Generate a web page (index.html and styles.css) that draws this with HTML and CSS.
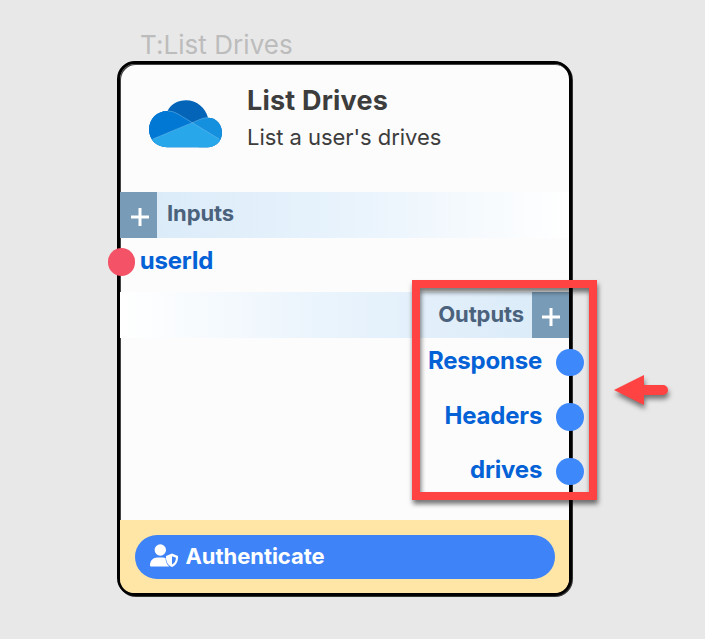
FILE: index.html
```html
<!DOCTYPE html>
<html lang="en">
<head>
<meta charset="utf-8">
<title>List Drives</title>
<link rel="stylesheet" href="styles.css">
</head>
<body>
<main class="canvas">
  <div class="node-label">T:List Drives</div>
  <section class="node">
    <header class="node-header">
      <svg class="logo" viewBox="0 0 74 48" aria-hidden="true">
        <defs><clipPath id="cloud"><path d="M18 47.200C7 47.200 0 39 0 29.500C0 19 8 11 18.500 11C22 4 29 .3 37 .3C47.500 .3 56.500 7.500 59 17.700C67 17.700 73 24 73 32.500C73 41 67 47.200 58.500 47.200Z"/></clipPath></defs>
        <g clip-path="url(#cloud)">
          <path fill="#0364b8" d="M0 0H74V48H0Z"/>
          <path fill="#0078d4" d="M0 11H18Q24 10.500 29 14L43.500 22.700L20 40L0 48Z"/>
          <path fill="#1490df" d="M43.500 22.700L52 19Q55 17.700 59 17.500L74 15V48H50Z"/>
          <path fill="#28a8ea" d="M0 40.800L4 39L43.500 22.700L70.500 39.200L74 48H0Z"/>
          <path fill="none" stroke="#7bbcea" stroke-width=".5" d="M19 11Q24 11 29 14L70.500 39.200M4 39L52 19Q55 17.700 59 17.700"/>
        </g>
      </svg>
      <div class="heading">
        <h1>List Drives</h1>
        <p>List a user's drives</p>
      </div>
    </header>
    <div class="bar bar-inputs">
      <span class="add"><svg viewBox="0 0 18 18"><path d="M9 0V18M0 9H18"/></svg></span>
      <span class="bar-title">Inputs</span>
    </div>
    <div class="inputs">
      <div class="port port-in"><i class="dot"></i><span>userId</span></div>
    </div>
    <div class="bar bar-outputs">
      <span class="bar-title">Outputs</span>
      <span class="add"><svg viewBox="0 0 18 18"><path d="M9 0V18M0 9H18"/></svg></span>
    </div>
    <div class="outputs">
      <div class="port port-out"><span>Response</span><i class="dot"></i></div>
      <div class="port port-out"><span>Headers</span><i class="dot"></i></div>
      <div class="port port-out"><span>drives</span><i class="dot"></i></div>
    </div>
    <footer class="node-footer">
      <button class="auth" type="button">
        <svg class="user" viewBox="0 0 29 24" aria-hidden="true">
          <circle cx="10.300" cy="6" r="5.700"/>
          <path d="M0 21.500C0 16.500 3 13.500 7.500 13.500H12.500C13.800 13.500 14.800 13.700 15.500 14C15.600 17.500 16.800 20.500 19.300 22.500H1Q0 22.500 0 21.500Z"/>
          <path fill-rule="evenodd" d="M22 9.500L28 12C28.300 17 26.500 21 22 23C17.500 21 15.700 17 16 12ZM22 12.200V20.500C24.700 19 25.900 16.500 25.900 13.700Z"/>
        </svg>
        <span>Authenticate</span>
      </button>
    </footer>
  </section>
  <div class="highlight"></div>
  <svg class="arrow" viewBox="0 0 54 32" aria-hidden="true"><path d="M0 15L30 0V10H49A5 5 0 0 1 49 20H30V30Z"/></svg>
</main>
</body>
</html>
```

FILE: styles.css
```css
* { box-sizing: border-box; }
body {
  margin: 0;
  background: #e8e8e8;
  font-family: Inter, "Liberation Sans", sans-serif;
  font-feature-settings: "calt" 0;
}
.canvas {
  position: relative;
  width: 705px;
  height: 639px;
  padding: 29px 0 0 117px;
  overflow: hidden;
}
.node-label {
  height: 32px;
  padding-left: 23px;
  font-size: 26px;
  line-height: 32px;
  letter-spacing: .05px;
  color: #bcbcbc;
  white-space: nowrap;
}
.node {
  display: flex;
  flex-direction: column;
  width: 455px;
  height: 535px;
  border: 3px solid #000;
  border-radius: 18px;
  background: #fcfcfc;
  box-shadow: 1px 1px 0 #333, inset 1px 1px 0 #444;
}
.node-header {
  display: flex;
  height: 128px;
  padding: 20px 0 0 29px;
}
.logo {
  width: 74px;
  height: 48px;
  margin-top: 16px;
}
.heading { margin-left: 24px; white-space: nowrap; color: #3d3d3d; }
h1 {
  margin: 0;
  font-size: 27px;
  line-height: 34px;
  font-weight: 700;
  letter-spacing: .2px;
}
p {
  margin: 3px 0 0;
  font-size: 22px;
  line-height: 32px;
  letter-spacing: -.05px;
}
.bar {
  display: flex;
  height: 46px;
  color: #4b627d;
  font-size: 22px;
  font-weight: 700;
  letter-spacing: -.1px;
}
.bar-title { line-height: 43px; }
.bar-inputs { background: linear-gradient(90deg, #d9eaf8, #e8f3fc 50%, #fff); }
.bar-inputs .bar-title { margin-left: 10px; }
.bar-outputs {
  justify-content: flex-end;
  background: linear-gradient(270deg, #d9eaf8, #e8f3fc 50%, #fff);
}
.bar-outputs .bar-title { margin-right: 8px; padding-top: 1px; }
.add {
  display: flex;
  align-items: center;
  justify-content: center;
  width: 37px;
  padding: 3px 0 0 2px;
  background: #789bb7;
}
.add svg { width: 18px; height: 18px; }
.add path { stroke: #fff; stroke-width: 3; }
.bar-outputs .add { padding-left: 1.500px; }
.inputs { height: 54px; padding-top: 10px; }
.port {
  display: flex;
  align-items: center;
  height: 28px;
  color: #0462d6;
  font-size: 24px;
  font-weight: 700;
  letter-spacing: -.18px;
}
.port span { line-height: 28px; margin-top: -2px; }
.dot {
  width: 27.500px;
  height: 27.500px;
  border-radius: 50%;
  background: #3d88fa;
}
.port-in .dot { margin: 0 4.500px 0 -12.300px; background: #f45266; }
.port-out { justify-content: flex-end; }
.port-out .dot { margin: 0 -14.700px 0 14px; }
.outputs {
  display: flex;
  flex-direction: column;
  gap: 26.5px;
  height: 182px;
  padding-top: 10.500px;
}
.port-out span { margin-top: -3px; }
.node-footer {
  height: 73px;
  padding: 15px 14px 14px 15px;
  background: #ffe6a6;
  border-radius: 0 0 14px 14px;
}
.auth {
  display: flex;
  width: 419.500px;
  height: 43.500px;
  padding: 9px 15px 0;
  gap: 6.500px;
  border: 0;
  border-radius: 22px;
  background: #3e83f8;
  color: #fff;
  font: 700 22px/26px Inter, sans-serif;
  letter-spacing: -.05px;
}
.auth span { margin-top: -1px; }
.user { width: 29px; height: 24px; fill: #fff; }
.highlight {
  position: absolute;
  left: 412px;
  top: 280px;
  width: 185px;
  height: 220px;
  border: 8px solid #ff4242;
  filter: drop-shadow(1px 4px 2.500px rgba(0, 0, 0, .55));
}
.arrow {
  position: absolute;
  left: 614px;
  top: 375px;
  width: 54px;
  height: 32px;
  overflow: visible;
  fill: #ff4242;
  filter: drop-shadow(1px 4px 2.500px rgba(0, 0, 0, .5));
}
```
